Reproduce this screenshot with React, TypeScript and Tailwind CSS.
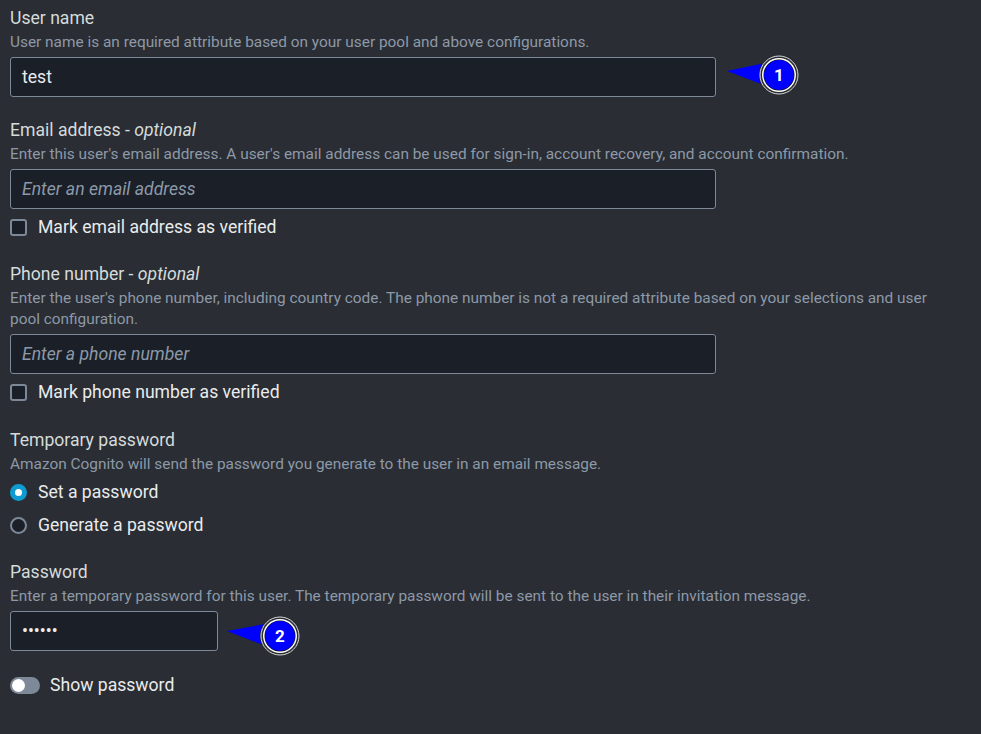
import React from "react"

function Label({ children }: { children: React.ReactNode }) {
  return <div className="text-[17.6px] leading-[22px] text-[#d5dbdb]">{children}</div>
}

function Desc({ children }: { children: React.ReactNode }) {
  return <div className="mt-[3px] text-[15.4px] leading-[21px] text-[#8d99a8]">{children}</div>
}

function TextBox({ value, placeholder, className = "w-[706px]" }: { value?: string; placeholder?: string; className?: string }) {
  return (
    <div className={`mt-[4px] h-[40px] flex items-center rounded-[3px] border border-[#7d8998] bg-[#1a1f28] px-[11px] ${className}`}>
      {value ? (
        <span className="text-[17.6px] text-[#e9ebed]">{value}</span>
      ) : (
        <span className="text-[17.6px] italic text-[#8d99a8]">{placeholder}</span>
      )}
    </div>
  )
}

function Check({ label }: { label: string }) {
  return (
    <div className="mt-[7px] flex items-center gap-[11px] h-[22px]">
      <div className="w-[17px] h-[17px] rounded-[3px] border-2 border-[#7d8998] bg-[#1a1f28]" />
      <span className="text-[17.6px] text-[#e9ebed]">{label}</span>
    </div>
  )
}

function Radio({ label, checked, className = "" }: { label: string; checked?: boolean; className?: string }) {
  return (
    <div className={`flex items-center gap-[11px] h-[22px] ${className}`}>
      {checked ? (
        <div className="w-[17px] h-[17px] rounded-full bg-[#0f9bd1] flex items-center justify-center">
          <div className="w-[7px] h-[7px] rounded-full bg-white" />
        </div>
      ) : (
        <div className="w-[17px] h-[17px] rounded-full border-2 border-[#7d8998] bg-[#1a1f28]" />
      )}
      <span className="text-[17.6px] text-[#e9ebed]">{label}</span>
    </div>
  )
}

function Marker({ n, tipX, tipY, cx, cy }: { n: number; tipX: number; tipY: number; cx: number; cy: number }) {
  return (
    <svg className="absolute left-0 top-0 pointer-events-none" width={981} height={734}>
      <polygon points={`${tipX},${tipY} ${cx - 4},${cy - 14} ${cx - 4},${cy + 14}`} fill="#0000ff" />
      <circle cx={cx} cy={cy} r={20} fill="#2a2d33" />
      <circle cx={cx} cy={cy} r={19} fill="none" stroke="#d9d9d9" strokeWidth={1} />
      <circle cx={cx} cy={cy} r={17} fill="#ffffff" />
      <circle cx={cx} cy={cy} r={15.5} fill="#111111" />
      <circle cx={cx} cy={cy} r={15} fill="#0000ff" />
      <text x={cx} y={cy + 6} textAnchor="middle" fill="#ffffff" fontSize="17" fontWeight="700" fontFamily="Roboto, sans-serif">
        {n}
      </text>
    </svg>
  )
}

export default function App() {
  return (
    <div className="relative w-[981px] h-[734px] overflow-hidden bg-[#2a2d33] font-['Roboto',sans-serif]">
      <div className="pl-[10px] pt-[7px]">
        {/* User name */}
        <Label>User name</Label>
        <Desc>User name is an required attribute based on your user pool and above configurations.</Desc>
        <TextBox value="test" />

        {/* Email */}
        <div className="mt-[22px]">
          <Label>
            Email address - <i>optional</i>
          </Label>
          <Desc>Enter this user's email address. A user's email address can be used for sign-in, account recovery, and account confirmation.</Desc>
          <TextBox placeholder="Enter an email address" />
          <Check label="Mark email address as verified" />
        </div>

        {/* Phone */}
        <div className="mt-[25px]">
          <Label>
            Phone number - <i>optional</i>
          </Label>
          <Desc>
            Enter the user's phone number, including country code. The phone number is not a required attribute based on your selections and user
            <br />
            pool configuration.
          </Desc>
          <TextBox placeholder="Enter a phone number" />
          <Check label="Mark phone number as verified" />
        </div>

        {/* Temporary password */}
        <div className="mt-[26px]">
          <Label>Temporary password</Label>
          <Desc>Amazon Cognito will send the password you generate to the user in an email message.</Desc>
          <Radio label="Set a password" checked className="mt-[6px]" />
          <Radio label="Generate a password" className="mt-[11px]" />
        </div>

        {/* Password */}
        <div className="mt-[25px]">
          <Label>Password</Label>
          <Desc>Enter a temporary password for this user. The temporary password will be sent to the user in their invitation message.</Desc>
          <TextBox value="••••••" className="w-[208px]" />
          <div className="mt-[23px] flex items-center gap-[10px] h-[22px]">
            <div className="w-[30px] h-[17px] rounded-full bg-[#7d8998] flex items-center px-[2px]">
              <div className="w-[13px] h-[13px] rounded-full bg-white" />
            </div>
            <span className="text-[17.6px] text-[#e9ebed]">Show password</span>
          </div>
        </div>
      </div>

      <Marker n={1} tipX={727} tipY={71} cx={779} cy={75} />
      <Marker n={2} tipX={227} tipY={631} cx={280} cy={636} />
    </div>
  )
}
